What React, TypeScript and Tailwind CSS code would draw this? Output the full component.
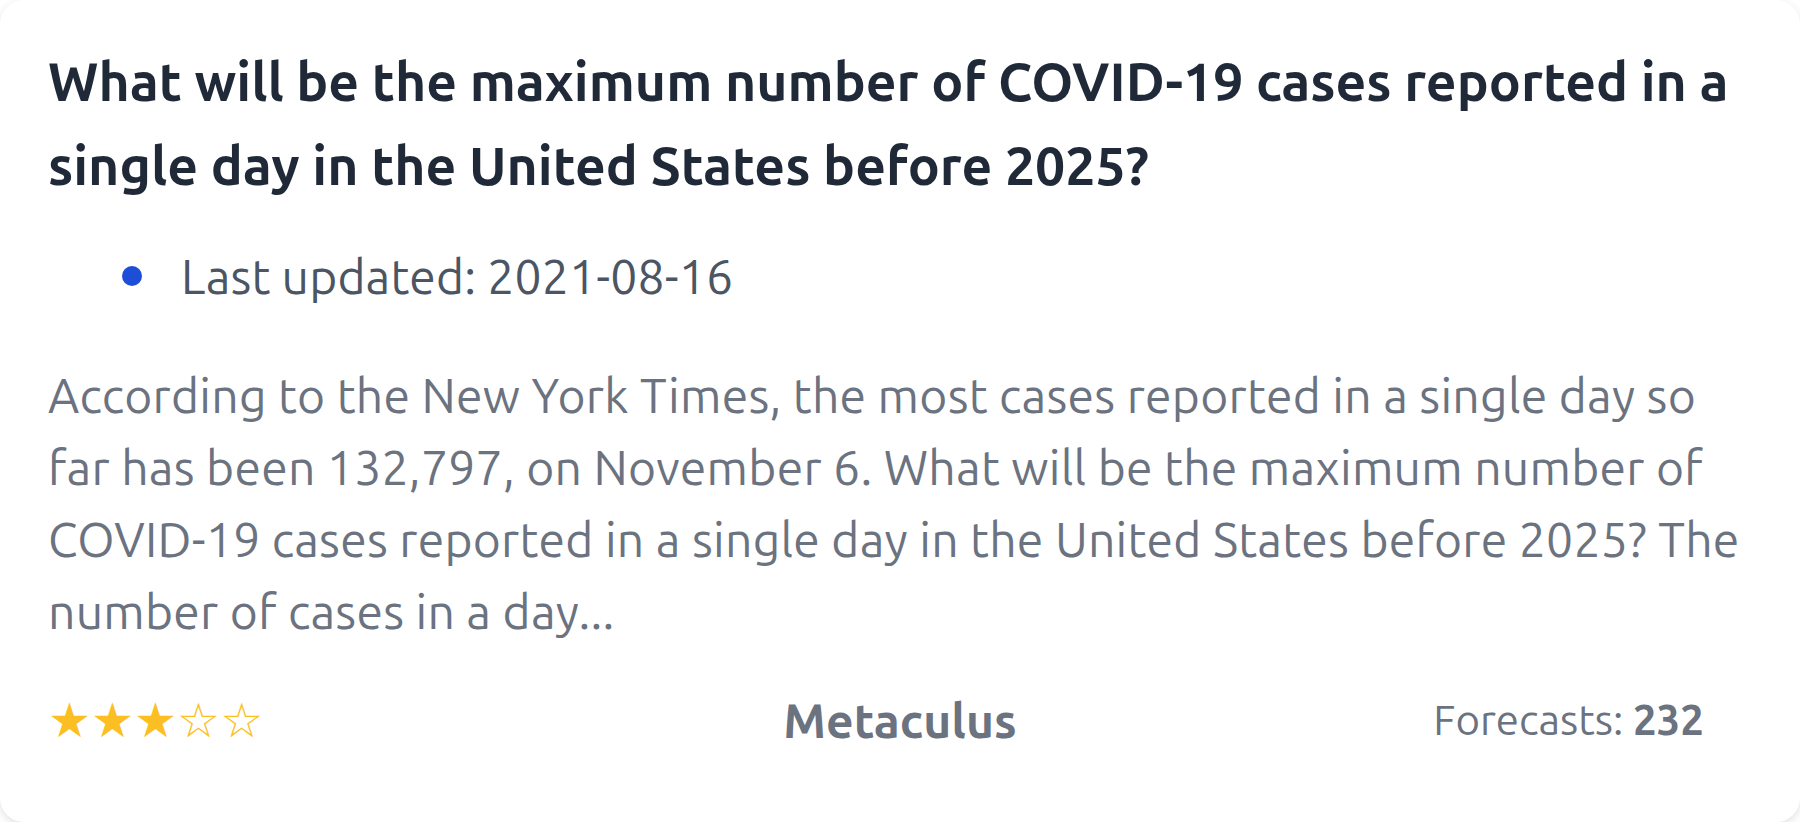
import React from "react";

export default function App() {
  return (
    <div className="h-[822px] w-full bg-white" style={{ fontFamily: "Ubuntu, 'Open Sans', sans-serif" }}>
      <div className="flex h-[822px] w-full flex-col rounded-[24px] bg-white px-[48px] pt-[39px] shadow-[0_3px_10px_rgba(0,0,0,0.12)]">
        <h3 className="text-[53.5px] font-bold leading-[84px] text-[#1f2937]">
          What will be the maximum number of COVID-19 cases reported in a single day in the United States before 2025?
        </h3>
        <div className="mt-[33px] flex items-center">
          <span className="ml-[74px] h-[20px] w-[20px] rounded-full bg-[#1d4ed8]" />
          <span className="ml-[39px] text-[48px] leading-[72px] tracking-[0.15px] text-[#4b5563]">Last updated: 2021-08-16</span>
        </div>
        <p className="mt-[47px] pr-[10px] text-[48px] leading-[72px] tracking-[0.26px] text-[#6b7280]">
          According to the New York Times, the most cases reported in a single day so far has been 132,797, on November 6. What will be the maximum number of COVID-19 cases reported in a single day in the United States before 2025? The number of cases in a day...
        </p>
        <div className="mt-[37px] grid grid-cols-3 items-center">
          <div className="text-[48px] leading-[72px] text-[#fbbf24]" style={{ fontFamily: "'DejaVu Sans', sans-serif" }}>
            ★★★☆☆
          </div>
          <div className="text-center text-[48px] font-bold leading-[72px] text-[#6b7280]">Metaculus</div>
          <div className="pr-[48px] text-right text-[42px] leading-[72px] text-[#6b7280]">
            Forecasts: <span className="font-bold">232</span>
          </div>
        </div>
      </div>
    </div>
  );
}
